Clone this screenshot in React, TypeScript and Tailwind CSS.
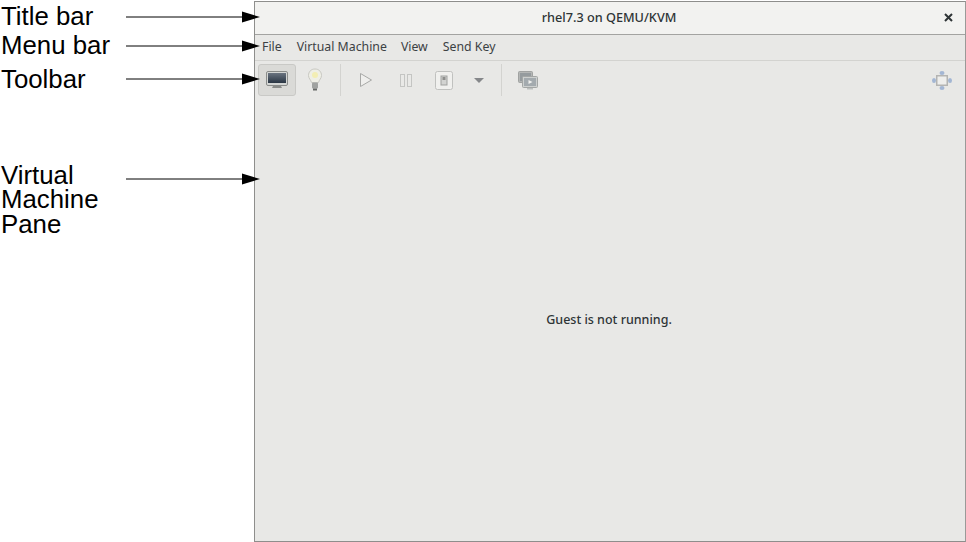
import React from 'react';

const Arrow = () => (
  <svg width="134" height="14" viewBox="0 0 134 14" className="shrink-0">
    <path d="M0 7H118" stroke="#000" strokeWidth="1" />
    <path d="M116 1.5L134 7L116 12.5Z" fill="#000" />
  </svg>
);

const Annotation = ({ lines, className, arrowClass = '' }: { lines: string[]; className: string; arrowClass?: string }) => (
  <div className={`flex items-start w-[260px] relative z-10 ${className}`}>
    <div className="w-[126px] pl-px font-['Liberation_Sans',sans-serif] text-[25.8px] leading-[24.5px] text-black">
      {lines.map((line) => (
        <div key={line}>{line}</div>
      ))}
    </div>
    <div className={`h-[24.5px] flex items-center ${arrowClass}`}>
      <Arrow />
    </div>
  </div>
);

const MonitorIcon = () => (
  <svg width="22" height="18" viewBox="0 0 22 18">
    <defs>
      <linearGradient id="screen" x1="0" y1="0" x2="0" y2="1">
        <stop offset="0" stopColor="#6a7480" />
        <stop offset="1" stopColor="#2a3644" />
      </linearGradient>
    </defs>
    <rect x="0.5" y="0.5" width="21" height="14" rx="1.5" fill="#d4d6d4" stroke="#8a8c8a" />
    <rect x="2" y="2" width="18" height="10" fill="url(#screen)" />
    <path d="M7 15h8l1 2H6z" fill="#8a8c8a" />
  </svg>
);

const BulbIcon = () => (
  <svg width="16" height="24" viewBox="0 0 16 24">
    <path d="M8 1C4 1 1.500 3.800 1.500 7.500c0 3 2.500 4.500 3 7h7c.5-2.500 3-4 3-7C14.500 3.800 12 1 8 1z" fill="#efefe6" stroke="#c8c8c2" />
    <circle cx="8" cy="7" r="3" fill="#f3eeb4" />
    <rect x="5" y="14.500" width="6" height="6" rx="1" fill="#a0a2a0" />
    <rect x="6" y="20.500" width="4" height="2" fill="#666866" />
  </svg>
);

const PlayIcon = () => (
  <svg width="14" height="16" viewBox="0 0 14 16">
    <path d="M1.500 1.500L12.500 8L1.500 14.500Z" fill="#efefed" stroke="#a8a9a7" />
  </svg>
);

const PauseIcon = () => (
  <svg width="12" height="13" viewBox="0 0 12 13">
    <rect x="0.500" y="0.500" width="4" height="12" fill="#e9e9e7" stroke="#c4c5c3" />
    <rect x="7.500" y="0.500" width="4" height="12" fill="#e9e9e7" stroke="#c4c5c3" />
  </svg>
);

const PowerIcon = () => (
  <svg width="18" height="19" viewBox="0 0 18 19">
    <rect x="0.500" y="0.500" width="17" height="18" rx="2" fill="#f0f0ee" stroke="#c0c1bf" />
    <rect x="6" y="5" width="6" height="9" fill="#d2d3d1" stroke="#a0a19f" />
    <rect x="7.500" y="6" width="3" height="3" fill="#8d8e8c" />
  </svg>
);

const SnapshotIcon = () => (
  <svg width="20" height="19" viewBox="0 0 20 19">
    <rect x="0.500" y="0.500" width="14" height="11" rx="1" fill="#b4b6b5" stroke="#a0a2a1" />
    <rect x="2" y="2" width="11" height="8" fill="#959b9e" />
    <rect x="4.500" y="5.500" width="15" height="11" rx="1" fill="#cdd0cf" stroke="#a3a6a5" />
    <rect x="6" y="7" width="12" height="8" fill="#a3aaae" />
    <path d="M10.500 9l4 2-4 2z" fill="#f0f0ee" />
    <rect x="9" y="17" width="6" height="1.500" fill="#bcbfbe" />
  </svg>
);

const FullscreenIcon = () => (
  <svg width="20" height="19" viewBox="0 0 20 19">
    <ellipse cx="10" cy="2" rx="2.500" ry="2" fill="#a3b6d3" />
    <ellipse cx="10" cy="17" rx="2.500" ry="2" fill="#a3b6d3" />
    <ellipse cx="2" cy="9.500" rx="2" ry="2.500" fill="#a3b6d3" />
    <ellipse cx="18" cy="9.500" rx="2" ry="2.500" fill="#a3b6d3" />
    <rect x="4.750" y="4.750" width="10.500" height="9.500" fill="#eeeeec" stroke="#b4b4b2" strokeWidth="1.500" />
  </svg>
);

const Separator = () => <div className="w-px h-[32px] bg-[#d3d3d0]" />;

export default function App() {
  return (
    <div className="w-[966px] h-[542px] bg-white flex overflow-hidden font-['Noto_Sans',sans-serif]">
      {/* callout labels on the left */}
      <div className="w-[254px] shrink-0 overflow-visible">
        <Annotation lines={['Title bar']} className="mt-[4px]" arrowClass="translate-y-px" />
        <Annotation lines={['Menu bar']} className="mt-[4px]" arrowClass="translate-y-px" />
        <Annotation lines={['Toolbar']} className="mt-[10px]" />
        <Annotation lines={['Virtual', 'Machine', 'Pane']} className="mt-[71px]" arrowClass="translate-y-[4px]" />
      </div>

      {/* virt-viewer window */}
      <div className="flex-1 mt-px h-[541px] flex flex-col border border-[#8e8e8c] border-r-[#9a9a98] bg-[#e8e8e6]">
        <div className="h-[33px] shrink-0 bg-[#f2f2f0] border-b border-[#a3a3a1] flex items-center relative">
          <div className="flex-1 text-center pr-[2px] text-[12.7px] font-medium text-[#2e3436]">rhel7.3 on QEMU/KVM</div>
          <svg width="9" height="9" viewBox="0 0 9 9" className="absolute right-[12px] top-[11px]">
            <path d="M1 1l7 7M8 1L1 8" stroke="#2e3436" strokeWidth="2" />
          </svg>
        </div>
        <div className="h-[26px] shrink-0 border-b border-[#d3d3d0] flex items-center pl-[7px] text-[12.3px] text-[#3c4144]">
          <span>File</span>
          <span className="ml-[15px]">Virtual Machine</span>
          <span className="ml-[14px]">View</span>
          <span className="ml-[15px]">Send Key</span>
        </div>
        <div className="h-[38px] shrink-0 flex items-center pl-[3px] pr-[13px]">
          <div className="w-[38px] h-[32px] rounded-[3px] bg-[#dadad7] border border-[#c9c9c6] flex items-center justify-center">
            <MonitorIcon />
          </div>
          <div className="w-[38px] flex justify-center"><BulbIcon /></div>
          <div className="ml-[6px]"><Separator /></div>
          <div className="ml-[18px]"><PlayIcon /></div>
          <div className="ml-[27px]"><PauseIcon /></div>
          <div className="ml-[23px]"><PowerIcon /></div>
          <svg width="10" height="5" viewBox="0 0 10 5" className="ml-[21px]">
            <path d="M0 0h10L5 5z" fill="#85878a" />
          </svg>
          <div className="ml-[17px]"><Separator /></div>
          <div className="ml-[16px]"><SnapshotIcon /></div>
          <div className="ml-auto"><FullscreenIcon /></div>
        </div>
        <div className="flex-1 flex items-center justify-center pt-[1px] pr-[2px] text-[12.5px] font-medium text-[#2e3436]">
          Guest is not running.
        </div>
      </div>
    </div>
  );
}
